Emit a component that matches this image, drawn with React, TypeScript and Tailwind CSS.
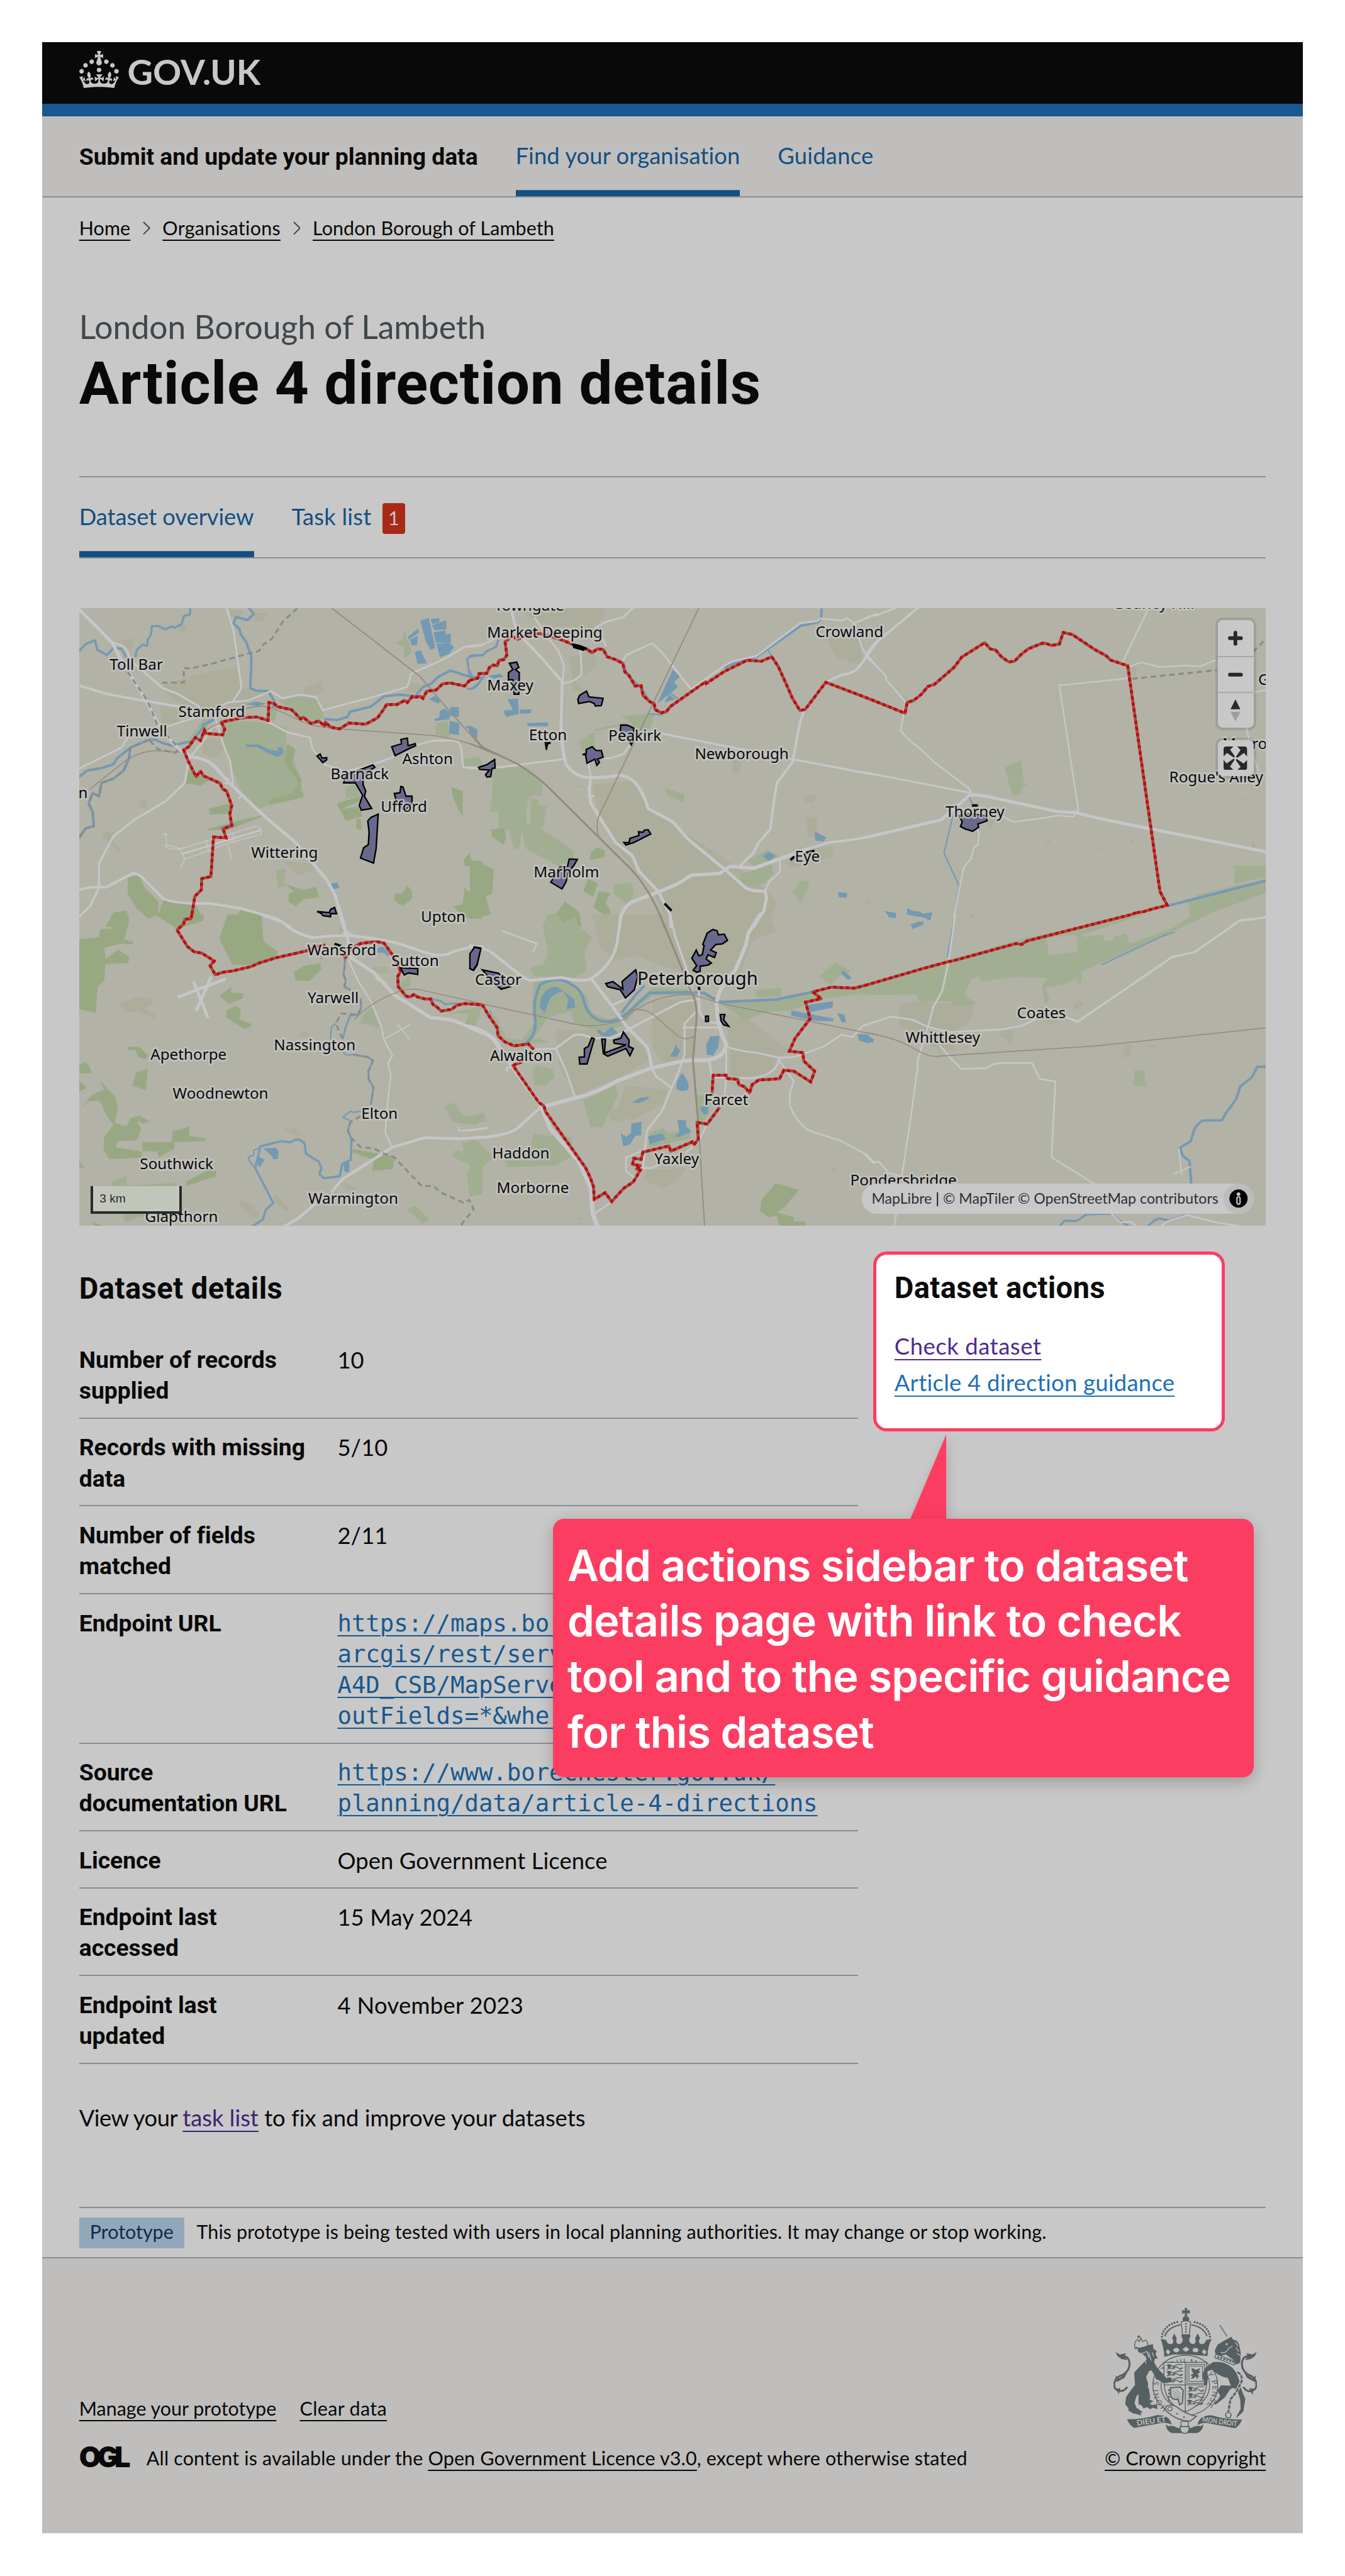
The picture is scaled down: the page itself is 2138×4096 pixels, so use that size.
import type { ReactNode } from 'react';

/* ---------- Map data ---------- */

type Line = [width: number, d: string];
type Tile = {
  x: number;
  y: number;
  urban?: string;
  wood?: string;
  park?: string;
  field?: string;
  water?: string;
  rivers?: Line[];
  roads?: Line[];
  rails?: Line[];
  dashes?: string;
  areas?: string;
  marks?: string;
  border?: string;
};

const SX = 0.42091;
const SY = 1 / 3;

const NW: Tile = {
  x: -8,
  y: -4,
  urban:
    'M325 395L480 330 625 300 640 400 740 420 680 480 520 520 400 470Z M330 480L420 500 400 570 340 600Z M500 650L560 650 575 700 540 740 490 715Z M400 95L437 97 428 125 405 130Z M880 400L950 365 960 420 890 440Z M110 1095L150 1100 150 1150 185 1195 170 1200 108 1120Z M150 175L230 160 230 195 195 215Z M600 15L650 30 630 60 600 50Z M690 30L745 40 715 80 690 75Z M800 1240L910 1250 920 1280 860 1310Z M250 940L280 950 275 990 250 975Z M1280 365L1335 385 1320 420 1275 420Z',
  wood:
    'M820 670L850 700 838 760 875 850 865 900 880 912 880 932 748 965 750 940 840 910 860 870 855 840 820 790 808 740Z M430 790L490 830 520 845 485 875 445 865 425 870Z M518 985L600 960 600 1010 520 1015Z M510 1085L640 1040 730 1015 720 1025 590 1090 510 1090Z M1010 960L1095 925 1105 945 1020 990Z M1020 990L1090 975 1110 1020 1045 1045Z M1085 1035h15l5 55-22-10Z M1450 882L1493 900 1493 1020 1480 1000 1455 930Z M815 1355L880 1380 930 1365 938 1415 880 1425 850 1460 822 1435 825 1395 845 1390Z M1232 1400L1262 1395 1280 1358 1297 1385 1297 1425 1262 1457 1230 1432Z M1498 1230L1520 1200 1525 1235 1568 1240 1568 1345 1540 1330 1540 1265 1500 1265Z M1500 1370L1530 1400 1568 1400 1568 1520 1495 1515 1457 1460 1492 1450Z M205 1320L250 1310 270 1370 325 1440 320 1500 285 1520 240 1470 205 1400Z M345 1425L470 1460 497 1520 400 1560 320 1500Z M150 1490L200 1478 210 1530 200 1560 120 1560Z M640 1475L705 1495 720 1560 590 1560Z',
  park:
    'M565 640L580 560 680 560 745 575 815 590 813 660 870 840 880 930 700 985 640 900 610 800Z M783 460L870 435 945 458 960 545 915 570 870 545 830 500Z M740 490L780 500 770 565 740 545Z M500 540L530 550 495 620 440 650 480 580Z M1040 880L1080 865 1100 920 1045 938Z M1495 745L1560 735 1568 775 1495 780Z M773 1285L813 1275 805 1340 818 1360 785 1370Z M1270 122L1298 225 1268 258 1265 200 1235 182 1260 165Z M1390 570L1438 560 1440 640 1388 625Z',
  water:
    'M1330 72L1362 60 1370 100 1387 205 1370 215 1350 170Z M1370 65L1403 60 1403 82 1375 90Z M1375 95L1430 70 1430 115 1385 120Z M1380 130L1425 120 1428 140 1447 135 1447 180 1390 180Z M1392 185L1440 180 1460 200 1440 235 1405 250Z M1283 150L1320 112 1325 130 1285 165Z M1290 165L1320 145 1318 190 1297 195Z M1308 225L1330 215 1355 280 1320 283Z M1363 455L1385 437 1408 460 1400 475Z M1405 510L1425 500 1447 520 1444 492 1478 492 1478 540 1445 535 1440 552 1385 560 1385 548 1402 545Z M1443 560L1480 570 1478 628 1440 622Z M1503 583L1530 585 1548 610 1548 648Z M987 1350L1012 1345 1018 1370 995 1377Z M660 672L710 675 750 700 785 705 780 685 800 690 805 715 782 735 745 715 700 685 660 686Z M660 478L700 466 740 475 700 488Z',
  rivers: [
    [3.5, 'M19 220L45 185 80 168 88 215 105 225 125 240 150 205 180 208 200 250'],
    [3.5, 'M445 12L445 42 422 50 412 90 385 107 375 100 350 115 320 98 298 100 295 140 282 165 280 195 262 190 240 215 235 245'],
    [4, 'M672 12L690 40 665 70 622 55 612 85 635 115 640 140 660 175 670 210 680 240 680 300 676 400 700 413 745 415 768 460 765 490'],
    [4, 'M19 830L50 800 100 790 150 770 165 740 180 725 215 690 250 670 290 650 310 650 345 670 380 680 420 665 450 660 490 600 495 580 540 550'],
    [4, 'M965 550L1010 555 1050 540 1060 515 1140 490 1190 440 1250 432 1310 440 1340 395 1370 380 1400 345 1445 315 1520 345 1568 350'],
    [3, 'M1510 400Q1540 420 1568 350M1520 345L1510 260 1530 240 1568 240'],
    [4, 'M19 1125L45 1080 75 1070 70 1000 55 960 70 910 95 925 105 860 150 840 190 800 210 740 215 690'],
    [5, 'M568 1080L612 1063'],
  ],
  roads: [
    [5, 'M19 20L100 120 145 180 175 250 275 460 325 580 380 670 420 710 450 735Q520 740 560 810L600 865 720 1010 850 1150 970 1330 1000 1400 1040 1560'],
    [3.5, 'M145 180Q210 190 210 260L340 400 400 430 480 490'],
    [3, 'M585 12L610 110 630 280 642 400 610 465'],
    [4, 'M19 388L130 430 270 462 400 490'],
    [3, 'M360 585L500 530 590 470 670 460 755 415 800 450 870 432 930 445 955 508 1050 475 1130 450 1280 395 1295 330 1420 260 1500 200 1568 188'],
    [3, 'M540 540L575 680 600 760 610 870'],
    [3.5, 'M440 745L425 860 350 950 230 1040 150 1120 95 1250 95 1370 60 1460 19 1510'],
    [4, 'M19 1380Q60 1360 120 1368L225 1300Q250 1300 270 1330L340 1420Q380 1450 520 1445L640 1470 780 1520 830 1560'],
    [3, 'M19 790L180 690 205 640M745 565L820 615 905 640 915 695 960 770 1030 800'],
    [3, 'M1030 810L1150 770 1225 735 1250 700 1380 655 1470 655 1485 680 1495 785 1568 788M440 745L500 650 530 590 570 580'],
    [3, 'M415 1205L712 1092M590 840Q600 870 580 862M650 920L632 935'],
    [1.6, 'M350 1160L410 1180 700 1070Q722 1080 718 1110L600 1150 425 1230 405 1180M350 1160Q350 1185 405 1182M425 1230L408 1270M590 1165L605 1227M355 1150L350 1105M340 1110h18M505 1140l12 55M610 1105l5 45'],
  ],
  rails: [
    [1.8, 'M990 12L1330 345 1420 480 1568 690'],
    [1.5, 'M60 890L180 770Q250 700 330 705L400 712M500 610Q560 560 640 545M660 500Q720 480 760 495L880 565Q930 590 1020 598L1380 630Q1470 645 1568 690'],
  ],
  dashes:
    'M857 12L800 80 760 160 725 190 710 220 660 235 520 285 445 305 420 302 422 372 325 375M205 320L280 460 320 580 400 690M290 655L320 695 385 715 410 690M19 1125L45 1080 75 1070 70 1000 55 960 70 910 95 925 105 860 150 840 190 800 210 740 215 690 290 650',
  areas:
    'M1220 685L1258 670 1255 650 1280 643 1283 680 1310 670 1312 680 1285 695 1233 728Z M933 730L945 720 952 740 970 738 970 748 955 762Z M1148 773L1155 785 1135 800 1110 830 1110 870 1120 900 1115 925 1143 985 1103 993 1095 970 1108 920 1080 860 1035 860 1045 820 1090 800Z M1230 912L1252 908 1255 878 1263 880 1275 925 1298 925 1298 960 1270 995 1240 960Z M1168 1012L1160 1180 1150 1250 1100 1225 1112 1175 1130 1160 1133 1100 1128 1045 1140 1028Z M933 1485L980 1490 985 1475 1000 1465 1008 1495 985 1495 985 1510 955 1505 950 1495Z',
  border:
    'M1520 362L1500 390 1470 382 1445 375 1415 380 1390 410 1355 415 1340 450 1330 440 1310 445 1300 440 1280 470 1270 460 1240 480 1200 480 1188 505 1165 545 1120 575 1055 570 1020 598 985 590 965 565 962 585 940 560 910 572 880 542 870 550 835 505 780 490 768 475 748 470 745 557 700 540 640 545 565 565 578 600 570 627 505 620 500 605 485 655 465 640 440 685 420 700 440 760 468 830 485 803 495 825 560 862 570 890 585 900 605 970 598 1010 605 1068 572 1083 583 1127 535 1123 525 1315 490 1325 488 1380 463 1412 452 1500',
};

const N: Tile = {
  x: 632,
  y: -4,
  urban:
    'M170 12L530 12 480 110 300 100Z M380 250L480 220 490 300 400 360 440 420 400 415Z M470 870L620 850 690 990 860 1130 980 1230 1140 1380 1180 1440 1140 1560 770 1560 700 1380 560 1170 500 1020Z M730 1320L840 1270 860 1300 1120 1360 1140 1560 760 1560Z M1370 160L1500 150 1510 290 1410 250Z M1010 750L1045 750 1035 820 1010 815Z M1290 1030L1335 1030 1330 1130 1300 1120Z M1300 1180L1400 1170 1390 1220 1240 1270 1210 1250Z M390 880L440 870 410 885Z M1290 920L1330 920 1320 960 1285 950Z',
  wood:
    'M82 1085L130 1080 140 1125 130 1160 85 1120Z M0 1260L50 1255 92 1280 85 1400 60 1410 80 1500 0 1520Z M465 1200L490 1172 520 1190 515 1222 460 1235Z M455 1325L490 1350 475 1415 435 1385Z M495 1388L540 1395 520 1440 540 1480 535 1520 475 1465Z M335 1490L365 1435 420 1490 430 1560 330 1560Z',
  park:
    'M580 535L710 525 695 590 660 625 600 600 620 570Z M480 600L600 565 600 575 480 612Z M420 660L480 610 480 690 430 700Z M90 790L200 780 280 850 275 920 230 925 215 1000 220 1060 270 1080 400 1190 395 1240 340 1265 215 1180 200 1090 190 1180 170 1180 150 1090 110 1090 110 1000 75 1005 85 930Z M235 935L265 945 262 965 297 970 280 1080 230 1085Z M0 740L35 735 40 775 0 780Z M555 1355L620 1345 630 1400 610 1450 550 1400Z M280 1560L300 1500 340 1490 340 1560Z M748 885L825 915 822 958 755 915Z M1040 1305L1160 1255 1168 1300 1130 1350 1060 1357 1045 1340Z M1065 1240L1140 1185 1190 1215 1100 1270Z M1275 1335L1305 1340 1300 1370 1272 1445 1240 1390Z',
  water:
    'M780 310L807 345 785 370 800 395 720 475Z M748 470L765 430 790 455Z M145 455L185 450 188 525 140 540 128 510 165 505Z M192 505L235 503 235 522 192 525Z M220 570L300 566 300 585 222 585Z M0 585L28 600 28 645 0 610Z M1125 1215L1148 1195 1175 1215 1150 1240Z M1325 1095L1345 1110 1370 1125 1360 1145 1328 1140Z M1415 1390L1450 1395 1448 1418 1418 1415Z M70 340L115 330 130 345 90 355Z',
  rivers: [
    [3.5, 'M0 245L50 240 60 225 100 200 110 165'],
    [3, 'M0 405Q40 380 60 330M0 320L10 350'],
    [4, 'M1352 12L1350 60 1335 82 1270 98 1145 210 1100 250 1050 260 980 300'],
    [2, 'M1145 212L1160 245M690 525L740 530'],
    [2.5, 'M590 290L610 340 660 400 700 480M770 425L798 450'],
  ],
  roads: [
    [5, 'M350 580Q352 700 370 770Q400 830 460 835Q520 835 575 823Q650 830 685 985L780 1050 840 1135 980 1280 1060 1370Q1090 1390 1135 1385L1140 1420 1130 1480 1090 1560'],
    [4.5, 'M160 12Q165 80 190 140L280 260 355 370 350 580'],
    [5, 'M465 840L458 890 465 960 510 1050 560 1150 625 1215 650 1290 725 1390 770 1500 772 1560'],
    [5.5, 'M575 1560Q575 1480 620 1440L725 1390 800 1350 850 1308 960 1300 1000 1265 1090 1275 1190 1230 1300 1180'],
    [4, 'M1300 1180L1380 1150 1490 1133 1568 1110'],
    [4, 'M1040 1260L1090 1200 1110 1150 1155 1085 1165 980 1180 860 1240 760 1270 560 1285 510 1368 372 1430 335Q1480 330 1500 290L1568 170'],
    [3.5, 'M740 622L1240 745 1490 805 1568 822'],
    [3, 'M250 60L280 120 340 220 362 290 355 375M425 220L430 330Q400 375 360 375M0 790L110 785 360 745M455 765L465 835'],
    [3, 'M480 110L520 80 590 55 625 12M590 265L600 240 700 183 740 230 850 405M850 405L980 290 1010 270 1100 245 1270 85 1335 75 1345 62 1430 72 1450 60 1475 85 1568 40M510 160L522 195'],
    [2.8, 'M1475 85L1510 215 1568 300M0 200L40 195 90 165M520 742L545 740 590 720 620 670M1190 1230L1193 1290 1150 1340 1135 1385M455 925h22'],
  ],
  rails: [
    [1.8, 'M880 12L500 1010Q480 1060 495 1120'],
    [2.2, 'M0 610Q40 680 60 695M0 670Q60 700 100 722'],
    [3, 'M60 695Q120 730 185 770Q260 830 300 880L620 1280Q700 1390 748 1560'],
  ],
  areas:
    'M152 280L180 274 188 300 175 310 190 325 188 430 170 430 165 360 148 360 148 325 165 310Z M415 455L422 435 448 415 458 443 512 450 505 485 482 487 478 475 460 465 418 475Z M580 580L605 580 630 595 628 655 620 675 610 650 578 605Z M290 665L310 665 298 672 294 700Z M433 722L447 718 447 698 470 685 485 703 505 703 512 735 490 745 498 760 488 775 480 745 450 765 445 725Z M33 785L65 772 95 747 97 788 85 790 80 830 65 832 60 820 75 798 38 795Z M592 1150L612 1150 615 1130 650 1115 648 1098 665 1100 670 1090 685 1088 695 1108 630 1150 600 1162Z M382 1230L413 1232 400 1260 375 1300 370 1340 354 1375 311 1343 345 1270 375 1265Z',
  marks: 'M748 1446L775 1481M393 189L420 196 450 210M397 199L440 215M1232 1235L1248 1218M1290 1200L1325 1190',
  border:
    'M0 362L30 352 35 330 65 328 75 300 90 288 105 292 112 265 130 262 142 240 135 175 160 150 185 162 210 148 270 135 340 160 400 190 450 212 470 228 490 210 512 212 528 248 560 262 588 280 595 320 612 340 635 390 658 388 665 435 690 465 708 475 712 505 735 520 755 515 770 490 905 370 908 378 980 318 1065 265 1120 270 1160 248 1185 295 1212 370 1240 450 1268 508 1288 505 1368 372 1520 445',
};

const NE: Tile = {
  x: 1272,
  y: -4,
  urban:
    'M1000 290L1040 300 1040 345 1010 350Z M140 440L160 440 160 470Z M470 1000L520 1040 470 1085Z M0 1430L30 1440 0 1450Z M405 1495h12v25h-12Z M1020 1130h12v18h-12Z M695 1140h14v15h-14Z M1485 1150h13v25h-13Z M1450 935l20 5v8l-16 2Z M900 1172l14 6v8h-14Z',
  park:
    'M535 785L598 752 608 860 620 865 618 875 603 875 600 905 585 922 563 918Z M1416 1262L1540 1262 1540 1315 1420 1350Z M1270 1405L1540 1325 1540 1395 1330 1490 1180 1560 1250 1510 1240 1440 1270 1430Z',
  water:
    'M70 1480L85 1485 115 1490 118 1515 100 1515 85 1500Z M160 1470L185 1482 210 1485 220 1495 258 1488 248 1530 235 1515 200 1510 160 1500Z M175 1550L200 1535 225 1533 205 1560 178 1560Z',
  rivers: [
    [4, 'M1168 1455L1540 1335'],
    [2.2, 'M398 910L400 935 410 960M335 1025L302 1200 310 1225 360 1360 342 1500'],
  ],
  roads: [
    [3, 'M0 60L38 42 45 48 65 35 115 12'],
    [4, 'M0 245L30 190 200 12'],
    [2.8, 'M0 245L40 290 80 345 80 360 155 470 135 605 150 630 180 665 210 695 260 755 400 890 405 910'],
    [3, 'M0 810L400 908'],
    [5, 'M0 1125L290 1040 400 920Q430 915 480 930L740 1000 815 1005Q840 1020 1090 1082L1540 1195'],
    [2.6, 'M1088 12L990 270M745 387L1015 352M745 387L818 990 800 1025 740 1018 690 1030 570 1050 530 1025'],
    [2.6, 'M1015 295L1060 275 1130 298 1230 290 1285 295 1345 265M1490 422L1540 408M1465 590L1480 700 1510 800M415 1040L437 1105 430 1165 418 1170 405 1230 378 1270 360 1380 342 1500 338 1560'],
    [2.6, 'M1400 1560Q1430 1525 1480 1522L1530 1515 1540 1505'],
  ],
  dashes: 'M1025 355L1350 313M1490 225L1540 160',
  areas: 'M360 1020L372 1050 365 1072 385 1085 412 1095 435 1075 432 1060 467 1045 462 1020 435 1015 400 1010Z',
  marks: 'M409 970L432 970',
  border:
    'M0 445L152 522 160 470 185 460 215 430 240 392 265 382 340 300 370 250 458 180 480 210 500 215 520 245 550 273 572 270 600 235 625 210 680 182 695 184 715 193 745 187 760 130 795 140 880 212 925 243 942 264 1008 292 1132 1388 1160 1455 1110 1470 1070 1485 1040 1491',
};

const SW: Tile = {
  x: -8,
  y: 496,
  urban:
    'M170 435L240 400 300 410 295 440 265 455 315 490 305 505 240 470 190 470Z M805 1040L850 1035 875 1080 830 1060Z M865 575L900 565 895 600 860 590Z M635 1385L690 1410 710 1460 690 1470 640 1425Z M770 1355L830 1430 815 1440 770 1400Z M1040 1300L1085 1325 1075 1345 1040 1330Z M1020 60L1040 70 1035 105 1015 100Z M1130 260L1200 250 1210 285 1170 285Z',
  wood:
    'M19 120L95 110 100 70 145 68 165 0 210 0 208 50 190 120 225 130 225 145 185 140 115 160 120 215 170 170 212 205 207 235 120 240 115 320 90 350 82 475 60 470 19 460Z M310 0L497 0 495 30 395 70Z M590 0L720 0 727 130 783 180 770 215 697 245 607 243 557 115Z M843 280L880 250 945 235 950 265 905 322 850 318Z M557 395L605 350 600 378 652 382 645 408 595 435Z M585 465L620 442 640 460 635 510 680 530 678 545 655 557 610 520 585 500Z M203 642L250 642 285 685 270 703 245 690 235 658 205 658Z M19 735L40 712 58 735 67 770 19 772Z M240 765L282 748 275 853 222 828Z M19 810L48 840 19 860Z M30 932L70 873 115 850 97 805 125 840 155 880 168 940 155 1010 200 1030 215 990 250 975 288 1003 265 1015 240 1000 258 1040 240 1095 165 1100 160 1130 258 1150 260 1180 135 1187 112 1140 115 1080 150 1020 122 970 97 902 60 905Z M262 1105L375 1105 378 1055 440 1028 443 1075 505 1085 505 1100 385 1105 385 1135 325 1180 320 1150 262 1148Z M430 1295L500 1250 520 1215 545 1245 545 1270 430 1318Z M1070 1138L1230 1175 1225 1235 1145 1245 1150 1190 1070 1155Z M70 1490L110 1512 75 1512Z M19 1200L40 1230 19 1230Z',
  park:
    'M140 1300L200 1270 200 1315 390 1303 390 1440 240 1470 200 1495 170 1430Z M1100 520Q1110 470 1145 450L1175 552 1095 525Z M1250 330L1292 290 1290 350 1255 365Z M1425 935L1460 912 1490 970 1560 1000 1550 1020 1455 1010Z M1490 1105L1543 1103 1535 1155 1568 1180 1568 1355 1520 1370 1508 1250 1530 1220 1455 1175 1460 1145 1495 1150Z M1275 1430L1310 1415 1368 1480 1340 1500Z M1430 480L1568 445 1540 545 1500 530 1520 480Z M945 200L965 195 945 232Z',
  water:
    'M725 1135L775 1132 785 1150 782 1187 765 1187 755 1165Z M705 1172L732 1190 712 1227 703 1210Z M1035 1210Q1045 1190 1058 1210L1056 1245Q1045 1260 1037 1240Z M1165 165L1185 155 1212 190 1205 203 1190 185 1165 185Z',
  rivers: [
    [3, 'M1040 200L1040 240 1035 290 1043 320 1038 350 1060 365M1100 410L1103 450 1090 485 1060 490 1045 540 1032 600'],
    [3, 'M1075 680L1130 692 1148 710 1130 760 1132 800 1150 840 1140 920M1060 1010L1052 1050 1065 1090'],
    [3.5, 'M1065 1090L1063 1190 1030 1210 1020 1270 960 1280 942 1260 950 1230 940 1200 890 1160 885 1110 865 1092 850 1092 830 1105 795 1100 715 1125 705 1180 695 1230 765 1400 735 1435 725 1480 685 1512'],
    [2.2, 'M1100 955L1075 960 1060 955 1033 985 1065 1003M712 1130L690 1145 690 1165 668 1180 675 1200 695 1230M985 605L988 545 1005 530M1035 670L1045 682 1075 680'],
    [3, 'M1375 410L1410 420 1425 435 1470 430'],
  ],
  roads: [
    [4.5, 'M720 0L800 35Q850 95 920 112Q1000 100 1060 102Q1200 120 1270 150L1350 185Q1400 205 1440 190Q1500 155 1568 155'],
    [5.5, 'M1022 0L1050 110 1060 205 1150 280 1230 390 1370 500Q1450 505 1490 530L1568 575'],
    [2.6, 'M1055 220L1090 320 1140 420 1180 540 1190 605 1223 685 1205 720 1217 780 1205 900 1195 1060 1222 1130'],
    [4.5, 'M810 1512L860 1475 925 1405M990 1345L1030 1285 1222 1130 1345 1083 1480 1088 1568 1080'],
    [2, 'M1190 605L1290 535M1245 535L1287 602M1060 105L1030 90 1050 80 1090 110'],
    [2.6, 'M1568 1040L1480 1050 1475 1035M1150 280L1170 320 1160 310M1200 330L1195 345'],
    [5, 'M402 398L577 314M460 330L512 495M525 305L470 462'],
  ],
  rails: [[1.5, 'M1078 508Q1130 430 1250 372Q1290 355 1330 365L1568 432']],
  dashes:
    'M1040 200L1040 240 1035 290 1043 320 1038 350 1060 365M1100 410L1103 450 1090 485 1025 480 1005 530 1030 600M1075 680L1130 692 1148 710 1130 760 1132 800 1150 840 1140 920M1100 978L1060 1010 1052 1050 1065 1085 1100 1128 1150 1135 1190 1160 1230 1178 1335 1318 1380 1318 1410 1350 1495 1398 1518 1385 1535 1430 1490 1500 1490 1512',
  areas:
    'M1253 258L1320 262 1320 290 1285 283 1268 293Z M1537 157L1562 162 1548 245 1535 270 1520 262 1530 185Z',
  marks: 'M1000 142L1025 152',
  border:
    'M452 0L448 20 425 22 420 45 395 75 435 155 460 180 490 187 538 225 522 248 542 292 570 280 610 273 680 252 710 235 780 208 890 177 930 155 965 148M1030 190L1042 210 1050 190 1070 160 1100 140 1130 135 1165 132 1190 138 1220 190 1255 275 1243 300 1245 350 1275 395 1290 400 1305 388 1320 400 1350 410 1370 410 1378 435 1395 450 1410 468 1450 460 1470 440 1500 432 1568 438',
};

const S: Tile = {
  x: 632,
  y: 496,
  urban:
    'M470 0L1150 0 1180 80 1080 130 1040 300 960 330 760 260 640 200 560 220 500 160Z M330 560L600 560 700 700 560 800 400 880 340 720Z M980 480L1060 500 1230 660 1180 700 1150 780 1000 790 1000 650Z M700 420L860 400 870 690 740 720 700 640Z M600 830L760 850 740 920 620 1000 560 960Z M680 1240L830 1230 800 1290 740 1330 670 1290Z M540 940L610 960 590 1010 540 1000Z M410 1480L435 1465 430 1485Z M1380 1240L1400 1230 1415 1255Z',
  wood:
    'M1120 1385L1175 1305 1265 1335 1210 1420 1180 1445 1245 1470 1245 1490 1290 1490 1290 1512 1190 1512 1180 1460 1150 1470 1115 1440Z M340 0L420 0 360 40Z',
  park:
    'M300 0L400 0 420 60 470 110 440 180 450 270 400 310 250 300 230 260 285 240 300 180 280 60Z M245 330Q330 280 400 340L450 400 470 480 540 510 600 470 700 355 840 365 1000 430 1180 420 1320 380 1568 330 1568 375 1350 410 1230 465 1130 475 1060 515 960 430 880 385 700 395 640 455 590 540 500 570 400 530 390 470 300 500 240 610 260 600 305 620 240 625 180 640 120 590 75 470 100 500 140 600 200 610 250 520 240 420Z M250 730L320 750 325 790 290 830 250 830 240 770Z M435 900L560 830 568 880 510 1030 465 1035Z M1342 300L1408 230 1465 275 1420 300 1385 340Z M245 1060L310 1075 390 1080 400 1170 350 1200 330 1220 140 1225 130 1170 230 1150Z M0 1090L30 1100 90 1180 40 1240 45 1360 0 1360Z M690 1060L740 1035 760 1060 840 1045 850 1085 770 1110 690 1130Z M870 880L930 870 920 960 900 1000 875 1000Z M1100 365L1195 355 1200 400 1100 400Z M0 980L55 960 62 1005 0 1010Z',
  water:
    'M272 410Q290 350 335 350L358 372Q310 385 300 430L288 478 268 450Z M358 370L400 410 405 450 372 460 378 410Z M485 560L500 560 515 575 545 543 568 575 530 592 500 585Z M790 630L808 660 795 690 768 690 782 660Z M925 590L960 590 955 640 935 685 910 680 908 630Z M815 768Q850 820 838 850Q815 865 795 845Q788 820 815 768Z M622 912L655 890 688 884 685 895 650 915Z M620 1015L660 1005 658 1070 635 1075 615 1115 590 1125 580 1060 600 1080 620 1060Z M685 1075L740 1063 753 1090 690 1115Z M798 998L832 998 830 1025 853 1055 800 1080 785 1075 805 1060Z M885 935L915 930 915 965 900 970 887 950Z M1290 440L1397 420 1393 452 1300 475Z M1235 465L1320 485 1398 505 1395 517 1320 515 1235 490Z M1412 478L1440 485 1445 525 1428 520Z M1490 580L1530 582 1552 612 1530 625 1495 610Z M1430 272L1440 275 1467 305 1455 318 1430 290Z',
  rivers: [
    [4.5, 'M215 625Q260 580 250 500Q240 420 270 340Q340 290 390 340Q430 360 440 430Q460 510 520 520Q580 520 630 450L690 380 840 378 900 380 960 425 1180 412 1320 375'],
    [4, 'M585 472L640 385 668 348'],
    [2, 'M70 485Q85 480 78 468'],
  ],
  roads: [
    [4.5, 'M0 150Q60 160 90 190L200 300 230 320 350 305Q440 330 465 310Q560 240 570 100L580 0'],
    [5, 'M465 310L545 440 600 540 680 640Q695 690 697 745'],
    [6, 'M272 935L405 890Q480 870 560 810L697 745 820 710 920 705Q980 690 985 630Q950 540 948 440Q950 360 1020 270L1060 150 1070 90 1115 0'],
    [7, 'M0 545Q90 580 110 640L165 740 270 920 310 1040 420 1200 465 1330 472 1450 490 1516'],
    [4.5, 'M0 1085Q130 1080 180 1040L272 935'],
    [3.5, 'M770 0L790 110 840 290 855 380M880 370L882 470Q900 530 955 525'],
    [3.5, 'M545 440L600 410 640 350M330 650L400 585Q430 575 470 600L545 600 620 550 740 470 810 425 880 410'],
    [3.2, 'M330 650L370 760 405 890M240 655L330 650M820 548L960 548M697 745L720 790 775 840M920 710L930 790'],
    [3.2, 'M870 470L825 530 825 680 800 770 775 840 740 950 680 1050 665 1230 700 1230 730 1210'],
    [2.8, 'M985 630L985 790 980 870M985 640Q1040 665 1100 670L1190 695 1250 690 1360 640 1430 582 1470 595 1510 540 1568 515'],
    [2.8, 'M930 790L1080 795Q1180 780 1190 695M1190 710L1245 810 1230 860 1230 930Q1270 1040 1320 1055L1430 1100 1510 1155 1550 1205 1568 1200'],
    [2.8, 'M910 1020L880 1100 830 1155M480 1450L545 1395M655 1150L600 1180 600 1245 630 1275M125 80L257 140 243 180M0 1047L68 1035M165 740Q130 740 145 760'],
  ],
  rails: [
    [3, 'M730 0L850 370Q875 420 870 520L857 700 880 1050'],
    [1.8, 'M880 1050L902 1516'],
    [1.5, 'M0 420L380 525Q480 560 590 510Q700 380 860 390L960 430 1568 585M620 465Q670 450 710 490L790 580Q830 620 860 590'],
  ],
  areas:
    'M933 72L950 78 955 98 978 95 990 125 970 142 945 145 925 172 947 185 940 208 915 195 908 215 928 235 915 245 885 250 885 275 872 280 858 270 872 248 853 212 870 172 880 200 893 195 900 150 895 145 912 90Z M637 268L645 300 632 365 598 405 578 365 530 350 522 335 550 325 588 362 585 325Z M468 598L478 603 465 660 450 725 422 725 420 692 440 690 440 650 455 640Z M507 605L521 605 517 672 600 632 555 625 552 610 580 600 590 570 612 610 610 640 628 650 615 685 600 650 530 687 513 675Z M906 493h11v25h-11Z M962 485L980 485 975 510 995 542 975 535 965 515Z M0 190L18 158 42 165 28 240 12 270 0 262Z M48 268L110 285 155 350 120 362 90 330Z',
  marks: 'M880 350L882 366',
  border:
    'M48 438L70 485 105 550 108 588 135 618 170 637 225 628 245 655M200 715L165 732 265 912 285 930 290 955 445 1230 462 1275 475 1320 478 1382 520 1350 545 1393 590 1330 628 1298 655 1240 640 1235 655 1218 625 1213 630 1183 658 1188 665 1153 765 1123 772 1148 855 1103 862 1117 878 1090 873 1008 912 1017 960 935M930 880L935 780 985 780 988 795 1030 800 1033 825 1055 835 1075 865 1085 825 1110 803 1190 797 1207 755 1245 760 1310 812 1325 760 1283 710 1280 670 1228 663 1250 600 1308 505 1290 425 1350 408 1318 375 1390 352 1478 357 1520 343',
};

const SE: Tile = {
  x: 1272,
  y: 496,
  urban:
    'M130 430L220 420 330 430 420 440 400 520 350 560 340 660 290 660 200 600 130 540Z M515 565L570 560 560 635 540 600 515 590Z M800 440L820 415 840 430 800 470Z M670 440L740 520 700 540Z M1000 630L1025 635 1015 690 990 695Z M1060 625L1118 635 1118 655Z M335 1138L358 1120 350 1135Z M785 1090l15 12-10 4Z',
  park:
    'M0 340L200 262 420 185 600 118 700 92 1040 0 1070 0 830 98 845 110 910 95 918 130 955 120 955 105 1000 92 1015 140 1035 135 1180 65 1260 0 1320 0 1080 140 830 275 832 320 820 340 812 310 770 335 690 355 708 405 690 435 680 345 700 308 580 303 520 310 455 325 430 302 410 310 380 390 425 430 400 440 365 443 335 440 330 420 205 420 200 388 70 390 0 390Z M1033 755L1075 757 1072 800 1080 835 1032 830Z',
  field: 'M695 112L810 98 818 182 705 197Z',
  water: 'M85 0h33l-3 15-25-3Z M175 45L225 33 220 50 180 70Z M0 585L32 605 28 622 0 620Z M205 0L250 0 245 28 225 15Z',
  rivers: [
    [4, 'M1540 737L1505 740 1485 790 1440 835 1425 895 1385 965 1370 998 1295 1000Q1270 1020 1262 1050L1250 1100 1210 1130 1218 1170 1245 1195 1252 1308'],
    [3.5, 'M745 1516L765 1485 810 1488 850 1455 945 1452 975 1485 1015 1514M1083 1514L1110 1485 1130 1475 1170 1485 1235 1455'],
    [2, 'M910 242L1140 105 1187 85M340 20L315 205'],
  ],
  roads: [
    [3, 'M345 0L330 130 318 235 295 370 260 450 240 545M0 535L100 495 180 510 240 545 320 570 520 558 600 540 650 510'],
    [3.5, 'M775 500L815 520 1180 205 1265 182 1440 28 1490 22 1540 12'],
    [2.8, 'M240 545L200 710 200 745 170 1020 140 1265M118 1452L110 1516M285 635L330 700 370 750 465 745Q490 720 530 720L640 720 670 797 730 810 715 1177 880 1308'],
    [2.8, 'M0 1160L35 1205 50 1198 90 1255 140 1270M945 1452L980 1495 1020 1490 1042 1514M1135 1514L1160 1490 1235 1458 1350 1495 1440 1512'],
    [2.4, 'M1205 1140L1215 1260M1187 1258L1248 1225'],
  ],
  rails: [[1.6, 'M0 572Q110 595 180 645Q240 690 270 688L880 638 1540 550']],
  border: 'M1040 -9L1020 0 820 64 620 128 600 145 580 140 340 223 320 228 220 262 0 343',
};

const TILES = [NW, N, NE, SW, S, SE];

const PLACES: [Tile, string, number, number, number?][] = [
  [NW, 'Toll Bar', 238, 312],
  [NW, 'Stamford', 528, 540],
  [NW, 'Tinwell', 260, 634],
  [NW, 'Ashton', 1358, 770],
  [NW, 'Barnack', 1097, 843],
  [NW, 'Ufford', 1267, 1000],
  [NW, 'Wittering', 808, 1225],
  [NW, 'Upton', 1418, 1537],
  [NW, 'Ketton', -40, 935],
  [N, 'Towngate', 228, 24],
  [N, 'Market Deeping', 288, 156],
  [N, 'Maxey', 155, 413],
  [N, 'Etton', 300, 653],
  [N, 'Peakirk', 634, 656],
  [N, 'Newborough', 1045, 746],
  [N, 'Marholm', 371, 1320],
  [N, 'Eye', 1297, 1242],
  [N, 'Crowland', 1459, 151],
  [NE, 'Thorney', 421, 1025],
  [NE, "Rogue's Alley", 1348, 858],
  [NE, 'Murrow', 1480, 695],
  [NE, 'Gedney Hill', 1107, 16],
  [NE, 'Guyhirn', 1620, 385],
  [SW, 'Wansford', 1028, 196],
  [SW, 'Sutton', 1310, 250],
  [SW, 'Yarwell', 995, 430],
  [SW, 'Nassington', 924, 660],
  [SW, 'Apethorpe', 439, 704],
  [SW, 'Woodnewton', 562, 893],
  [SW, 'Elton', 1173, 990],
  [SW, 'Southwick', 393, 1236],
  [SW, 'Warmington', 1072, 1402],
  [SW, 'Glapthorn', 412, 1492],
  [S, 'Castor', 109, 340],
  [S, 'Alwalton', 197, 710],
  [S, 'Peterborough', 875, 340, 29.7],
  [S, 'Farcet', 985, 924],
  [S, 'Yaxley', 795, 1210],
  [S, 'Haddon', 196, 1183],
  [S, 'Morborne', 242, 1353],
  [SE, 'Pondersbridge', 146, 1316],
  [SE, 'Whittlesey', 297, 622],
  [SE, 'Coates', 676, 503],
];

function Strokes({ lines, color }: { lines?: Line[]; color: string }) {
  return (
    <g fill="none" stroke={color} strokeLinejoin="round" strokeLinecap="round">
      {lines?.map(([w, d], i) => (
        <path key={i} d={d} strokeWidth={w} vectorEffect="non-scaling-stroke" />
      ))}
    </g>
  );
}

function Layer({ children }: { children: (t: Tile) => ReactNode }) {
  return (
    <>
      {TILES.map((t, i) => (
        <g key={i} transform={`translate(${t.x} ${t.y}) scale(${SX} ${SY})`}>
          {children(t)}
        </g>
      ))}
    </>
  );
}

function MapCanvas() {
  return (
    <svg viewBox="0 0 1920 1000" className="block h-full w-full" aria-label="Map of the area">
      <rect width="1920" height="1000" fill="#b2b2a6" />
      <Layer>
        {(t) => (
          <>
            <path d={t.urban} fill="#adad9c" />
            <path d={t.park} fill="#a2ae92" />
            <path d={t.wood} fill="#98a883" />
            <path d={t.field} fill="#b2b2a6" />
          </>
        )}
      </Layer>
      <Layer>
        {(t) => (
          <>
            <path d={t.water} fill="#7499b3" />
            <Strokes lines={t.rivers} color="#7499b3" />
          </>
        )}
      </Layer>
      <Layer>
        {(t) => (
          <>
            <Strokes lines={t.roads} color="#c6c6c8" />
            <Strokes lines={t.rails} color="#928a80" />
            <path d={t.dashes} fill="none" stroke="#8b8b8b" strokeWidth="3.2" strokeDasharray="9 6" vectorEffect="non-scaling-stroke" />
          </>
        )}
      </Layer>
      <Layer>
        {(t) => (
          <>
            <path d={t.border} fill="none" stroke="#9b4a4a" strokeWidth="4.6" strokeLinejoin="round" vectorEffect="non-scaling-stroke" />
            <path d={t.border} fill="none" stroke="#cd0000" strokeWidth="4.6" strokeDasharray="5 5" vectorEffect="non-scaling-stroke" />
            <path d={t.areas} fill="#69698e" stroke="#000" strokeWidth="2.4" vectorEffect="non-scaling-stroke" />
            <path d={t.marks} fill="none" stroke="#000" strokeWidth="4" vectorEffect="non-scaling-stroke" />
          </>
        )}
      </Layer>
      <g
        fill="#0a0a0a"
        stroke="#c6c6c4"
        strokeOpacity="0.72"
        strokeWidth="6"
        strokeLinejoin="round"
        paintOrder="stroke"
        textAnchor="middle"
        className="font-['Noto_Sans',sans-serif]"
      >
        {PLACES.map(([t, name, x, y, size = 24.7]) => (
          <text key={name} x={t.x + x * SX} y={t.y + y * SY} fontSize={size}>
            {name}
          </text>
        ))}
      </g>
    </svg>
  );
}

function MapPanel() {
  return (
    <div className="relative mt-[80px] h-[1000px] w-[1920px] overflow-hidden">
      <MapCanvas />
      <div className="absolute right-[20px] top-[20px] flex flex-col gap-[20px]">
        <div className="flex w-[58px] flex-col rounded-[8px] bg-[#c8c8c8] shadow-[0_0_0_4px_rgba(0,0,0,0.1)]">
          <div className="flex h-[58px] items-center justify-center">
            <svg width="24" height="24" viewBox="0 0 24 24" stroke="#292929" strokeWidth="6" strokeLinecap="round">
              <path d="M3 12h18M12 3v18" />
            </svg>
          </div>
          <div className="flex h-[58px] items-center justify-center border-t-[2.1px] border-[#a8a8a8]">
            <svg width="24" height="24" viewBox="0 0 24 24" stroke="#292929" strokeWidth="6" strokeLinecap="round">
              <path d="M3 12h18" />
            </svg>
          </div>
          <div className="flex h-[58px] items-center justify-center border-t-[2.1px] border-[#a8a8a8]">
            <svg width="16" height="36" viewBox="0 0 16 36">
              <path d="M8 0l8 16H0z" fill="#292929" />
              <path d="M8 36l8-16H0z" fill="#9e9e9e" />
            </svg>
          </div>
        </div>
        <div className="flex h-[58px] w-[58px] items-center justify-center rounded-[8px] bg-[#c8c8c8] shadow-[0_0_0_4px_rgba(0,0,0,0.1)]">
          <svg width="38" height="38" viewBox="0 0 38 38" fill="#292929">
            {[0, 90, 180, 270].map((a) => (
              <path key={a} transform={`rotate(${a} 19 19)`} d="M0 16V4Q0 0 4 0H16L10.5 5 18 15.5Q18.5 18 16 17.500L5.500 10.500Z" />
            ))}
          </svg>
        </div>
      </div>
      <div className="absolute bottom-[20px] left-[19px] h-[44px] w-[147px] border-x-[4.1px] border-b-[4.1px] border-[#292929] bg-[#cdd0ca]/70 pl-[10px] pt-[8px] font-['Liberation_Sans',sans-serif] text-[19.5px] leading-[24px] text-[#292929]">
        3 km
      </div>
      <div className="absolute bottom-[20px] right-[20px] flex h-[48px] w-[634px] items-center justify-between rounded-[24px] bg-[#c8c8c8] pl-[16px]">
        <span className="whitespace-nowrap text-[23.5px] leading-[30px] tracking-[0.05px] text-[#2f2f2f]">
          MapLibre <span className="text-black">|</span> © MapTiler © OpenStreetMap contributors
        </span>
        <span className="flex h-[48px] w-[48px] items-center justify-center rounded-full bg-[#bcbcbc]">
          <svg width="30" height="30" viewBox="0 0 30 30">
            <circle cx="15" cy="15" r="14.7" fill="#000" />
            <circle cx="15" cy="8" r="3" fill="#c8c8c8" />
            <rect x="12.5" y="12.5" width="5" height="11.5" rx="2.300" fill="none" stroke="#c8c8c8" strokeWidth="2.2" />
          </svg>
        </span>
      </div>
    </div>
  );
}

/* ---------- Emblems ---------- */

function Crown() {
  return (
    <svg width="64" height="60" viewBox="0 0 32 30" fill="#c8c8c8" aria-hidden="true">
      <path d="M22.6 10.4c-1 .4-2-.1-2.4-1-.4-.9.1-2 1-2.4.9-.4 2 .1 2.4 1s-.1 2-1 2.4m-5.9 6.7c-.9.4-2-.1-2.4-1-.4-.9.1-2 1-2.4.9-.4 2 .1 2.4 1s-.1 2-1 2.4m10.8-3.7c-1 .4-2-.1-2.4-1-.4-.9.1-2 1-2.4.9-.4 2 .1 2.4 1s0 2-1 2.4m3.3 4.8c-1 .4-2-.1-2.4-1-.4-.9.1-2 1-2.4.9-.4 2 .1 2.4 1s-.1 2-1 2.4M17 4.7l2.3 1.2V2.5l-2.3.7-.2-.2.9-3h-3.4l.9 3-.2.2c-.1.1-2.3-.7-2.3-.7v3.4L15 4.7c.1.1.1.2.2.2l-1.3 4c-.1.2-.1.4-.1.6 0 1.1.8 2 1.9 2.2h.7c1-.2 1.9-1.1 1.9-2.1 0-.2 0-.4-.1-.6l-1.3-4c-.1-.2 0-.2.1-.3m-7.6 5.700c.9.4 2-.1 2.400-1 .4-.9-.1-2-1-2.400-.9-.4-2 .1-2.400 1s0 2 1 2.400m-5 3c.9.4 2-.1 2.400-1 .4-.9-.1-2-1-2.400-.9-.4-2 .1-2.400 1s.1 2 1 2.400m-3.200 4.800c.9.4 2-.1 2.400-1 .4-.9-.1-2-1-2.400-.9-.4-2 .1-2.400 1s0 2 1 2.400m14.800 11c4.400 0 8.600.3 12.300.8 1.100-4.500 2.400-7 3.700-8.800l-2.500-.9c.2 1.300.3 1.900 0 2.700-.4-.4-.8-1.100-1.100-2.300l-1.200 4c.7-.5 1.300-.8 2-.9-1.100 2.500-2.600 3.100-3.500 3-1.100-.2-1.700-1.200-1.500-2.100.3-1.200 1.500-1.500 2.100-.1 1.100-2.300-.8-3-2-2.300 1.900-1.900 2.100-3.500.6-5.600-2.100 1.600-2.100 3.200-1.200 5.500-1.200-1.400-3.200-.6-2.500 1.600.9-1.400 2.100-.5 1.900.8-.2 1.100-1.700 2.100-3.500 1.900-2.700-.2-2.900-2.100-2.900-3.600.7-.1 1.900.5 2.900 1.900l.4-4.300c-1.100 1.100-2.100 1.400-3.200 1.400.4-1.200 2.100-3 2.100-3h-5.400s1.700 1.900 2.100 3c-1.100 0-2.100-.2-3.200-1.400l.4 4.300c1-1.400 2.200-2 2.900-1.900-.1 1.500-.2 3.400-2.900 3.600-1.900.2-3.400-.8-3.500-1.900-.2-1.300 1-2.200 1.900-.8.7-2.300-1.200-3-2.500-1.600.9-2.200.9-3.900-1.200-5.500-1.500 2-1.300 3.700.6 5.600-1.200-.7-3.100 0-2 2.300.6-1.400 1.800-1.100 2.100.1.2.9-.3 1.900-1.500 2.100-.9.2-2.400-.5-3.500-3 .6 0 1.200.3 2 .9l-1.200-4c-.3 1.100-.7 1.900-1.100 2.300-.3-.8-.2-1.400 0-2.700l-2.900.9C1.300 23 2.600 25.500 3.700 30c3.700-.5 7.900-.8 12.300-.8" />
    </svg>
  );
}

function Lion({ x, y }: { x: number; y: number }) {
  return (
    <g transform={`translate(${x} ${y})`} fill="none" stroke="#565f62" strokeWidth="6">
      <path d="M2 8q12-8 22 0t22-2q14-6 32-2M8 20q14 6 26-2t24 2 20-2M4 28l12-8M32 26l10-8M62 26l12-8" strokeWidth="4" />
      <path d="M6 4q10-4 18 2l-4 14-12-2z" fill="#565f62" stroke="none" />
    </g>
  );
}

function Crest() {
  return (
    <svg width="232" height="204" viewBox="587 285 673 612" preserveAspectRatio="none" fill="#565f62" aria-label="Royal coat of arms">
      {/* crown */}
      <path d="M920 285h14l-3 12 14-3v18l-14-3 3 14h-14l3-14-14 3v-18l14 3z" />
      <path d="M912 345q-4-18 15-22 19 4 15 22l-4 12h-22z" />
      <path d="M905 352q22-10 44 0l-6 62h-32z" fill="#bfbebd" stroke="#565f62" strokeWidth="4" />
      <path d="M927 358v46" stroke="#565f62" strokeWidth="8" strokeDasharray="7 6" fill="none" />
      <path d="M814 424q10-62 86-74M1040 424q-10-62-86-74" fill="none" stroke="#565f62" strokeWidth="10" strokeLinecap="round" strokeDasharray="0.1 13.5" />
      <path d="M828 422q14-44 74-56M1026 422q-14-44-74-56" fill="none" stroke="#565f62" strokeWidth="6" />
      <path d="M808 434l26 6q8 26 28 18 12-10 0-26l10-24 12 24q-8 22 8 28 20 0 20-24l-8-20h46l-8 20q0 24 20 24 16-6 8-28l12-24 12 24q-12 16 0 26 20 8 28-18l26-6q-18 36-20 84l-90-8h-70l-42 12q-4-50-18-90z" />
      <g fill="#bfbebd">
        <ellipse cx="882" cy="489" rx="14" ry="11" />
        <ellipse cx="972" cy="489" rx="14" ry="11" />
        <path d="M927 472l17 14-17 12-17-12zM842 484l12 14-10 14-12-14zM1012 484l12 14-10 14-12-14z" />
      </g>
      {/* garter and shield */}
      <ellipse cx="924" cy="660" rx="152" ry="146" fill="#bfbebd" stroke="#565f62" strokeWidth="4" />
      <ellipse cx="924" cy="660" rx="114" ry="112" fill="none" stroke="#565f62" strokeWidth="4" />
      <path id="garter" d="M842 772A128 122 0 1 1 1006 772" fill="none" />
      <text fontSize="36" className="font-['Lato',sans-serif]" letterSpacing="4">
        <textPath href="#garter">HONI SOIT QUI MAL Y PENSE</textPath>
      </text>
      <path d="M824 549h200v90q0 110-100 150-100-40-100-150z" fill="#bfbebd" stroke="#565f62" strokeWidth="4" />
      <path d="M924 549v240M824 658h200" stroke="#565f62" strokeWidth="4" />
      <Lion x={834} y={556} />
      <Lion x={834} y={588} />
      <Lion x={834} y={620} />
      <Lion x={934} y={664} />
      <Lion x={934} y={696} />
      <Lion x={930} y={728} />
      <path d="M932 558h82v92h-82zM941 567h64v74h-64z" fill="none" stroke="#565f62" strokeWidth="3" />
      <path d="M952 582q10-10 16 2l14-2 12-8-6 16 8 8-14 4 6 14-10 14-4-14-12 10-12 2 8-12-10-6 14-6z" />
      <path d="M854 672l46-4 14 16-4 62-12 8-8-26q-30 4-34-20z" fill="none" stroke="#565f62" strokeWidth="6" />
      <path d="M866 684l36 34M866 696l34 32M878 680l26 24M866 708l26 24" stroke="#565f62" strokeWidth="2" />
      <path d="M848 680v60" stroke="#565f62" strokeWidth="8" strokeDasharray="8 8" />
      {/* lion supporter */}
      <path d="M688 478q-6-26 10-40l10 10 8-18 8 18 14-8q14 14 8 40z" fill="none" stroke="#565f62" strokeWidth="4" />
      <path d="M705 416v18M698 424h16" stroke="#565f62" strokeWidth="5" />
      <path d="M686 486l70-22 16-4 2 22 16 12-6 14 10 20-14 4-2 16 14 26 44 52 24 6 2 12-40 6-34-22-22-40-12 2-14 30 10 34-8 50 10 22 22 12-20 10 16 0-24 8-12-30-10-16-8-34-10 26-12 12-8 30 8 24 30 22-10 4 4 12-14-4-26-6-22-14 2-10-16-20 4-36 20-28 22-30-4-60 60-66-18-22-22-10-8-30z" />
      <path d="M706 670l46 2 8 50-20 20 28 14 22-4 4 24-22-8-12 8-16-10-16 6-10-16-14-4z" />
      <path d="M700 500l18 6 26-10 10 30M712 520l14 10 14-12M704 532l8 14M734 532l6 22M752 500l12 40M768 500l8 20" fill="none" stroke="#bfbebd" strokeWidth="4" />
      <path d="M652 668q-18 26-44 18-24-12-16-42 8-26 36-34 38-20 34-62-6-32-36-30" fill="none" stroke="#565f62" strokeWidth="9" />
      <path d="M597 498l20 12 28-6-6 14 12 20-26-6-20-14zM596 612l16 14 40-28-14 26-36 20zM600 676l20-2-8 30z" />
      {/* unicorn supporter */}
      <path d="M1086 368l34 54" stroke="#565f62" strokeWidth="5" strokeDasharray="9 2" />
      <path d="M1140 424l8 14 18 6 10 16 8 40-2 50-20 10-8-20-40-30-32 10-16-12-4-16 14-30 30-18z" />
      <path d="M1090 500q24 8 36-18l20-14M1158 450l14 20M1162 476l14 20M1166 504l16 12" fill="none" stroke="#bfbebd" strokeWidth="4" />
      <circle cx="1118" cy="460" r="5" fill="#bfbebd" />
      <path d="M1068 508l90 36-4 18-92-36z" fill="#bfbebd" stroke="#565f62" strokeWidth="4" />
      <path d="M1074 522l80 26" stroke="#565f62" strokeWidth="9" strokeDasharray="9 6" />
      <path d="M1052 548q50-8 90 24 24 24 34 60l12 50 18 46-10 60-34 32 6-16 16-30-2-44-14-48-20-10-14 8-26 40-40 32-16 2 26-26 10-18-14-24 18-26 46 2-14-38q-40-6-76-40l-20 8 2 34-4 30-12 6-10-56 14-30z" />
      <path d="M1168 596q26 10 20 46l-22 46-30 40-10 60" fill="none" stroke="#bfbebd" strokeWidth="16" />
      <path d="M1168 596q26 10 20 46l-22 46-30 40-10 60" fill="none" stroke="#565f62" strokeWidth="9" strokeDasharray="18 5" />
      <circle cx="1126" cy="805" r="13" fill="none" stroke="#565f62" strokeWidth="5" />
      <path d="M1196 668q18 28 44 18 24-12 16-42-8-26-32-34-38-20-34-62 6-32 36-30" fill="none" stroke="#565f62" strokeWidth="9" />
      <path d="M1259 498l-20 12-28-6 6 14-12 20 26-6 20-14zM1256 612l-16 14-40-28 14 26 36 20zM1244 676l-20-2 16 34z" />
      {/* belt and scrolls */}
      <path d="M834 762q20-14 52 4 40 34 90 44l-30 24q-60-2-106-44-14-14-6-28z" fill="#bfbebd" stroke="#565f62" strokeWidth="5" />
      <circle cx="852" cy="774" r="10" fill="none" stroke="#565f62" strokeWidth="4" />
      <circle cx="886" cy="798" r="4" />
      <circle cx="918" cy="814" r="4" />
      <path d="M904 836h34v30h-34z" fill="#bfbebd" stroke="#565f62" strokeWidth="4" />
      <path d="M832 850q4 36 30 42h116q26-6 32-42l-14 8q-20-4-40 6-36 18-72 0-20-10-38-6z" />
      <path d="M900 860h42v14q-4 20-21 20-18-2-21-20z" fill="#bfbebd" stroke="#565f62" strokeWidth="5" />
      <path d="M650 825q80 0 140-20 60-4 70 46-30-16-60-6l-116 22q-20-10-34-42zM1191 826q-80 0-140-20-60-4-70 46 30-16 60-6l116 22q20-10 34-42z" />
      <g fill="#bfbebd" textAnchor="middle" className="font-['Lato',sans-serif] font-bold">
        <text transform="translate(766 846) rotate(-8)" fontSize="37" textLength="138" lengthAdjust="spacingAndGlyphs">
          DIEU ET
        </text>
        <text transform="translate(1084 848) rotate(8)" fontSize="35" textLength="164" lengthAdjust="spacingAndGlyphs">
          MON DROIT
        </text>
      </g>
    </svg>
  );
}

/* ---------- Page ---------- */

const link = 'underline decoration-[2.1px] underline-offset-[7px]';

function Chevron() {
  return (
    <svg className="mx-[20px]" width="12" height="22" viewBox="0 0 12 22" fill="none" stroke="#3f474a" strokeWidth="2">
      <path d="M1 1l10 10L1 21" />
    </svg>
  );
}

function Row({ label, children }: { label: string; children: ReactNode }) {
  return (
    <div className="flex border-b-[2.1px] border-[#8b8d8f] pb-[18px] pt-[22px] leading-[50px]">
      <dt className="w-[378px] shrink-0 whitespace-pre-line font-['Roboto',sans-serif] text-[38px] font-bold tracking-[-0.05px]">
        {label}
      </dt>
      <dd className="ml-[40px] text-[37px] tracking-[0.1px]">{children}</dd>
    </div>
  );
}

function Mono({ lines }: { lines: string[] }) {
  return (
    <a className="font-['DejaVu_Sans_Mono',monospace] text-[38px] tracking-[-0.03px] text-[#175890]">
      {lines.map((l) => (
        <span key={l} className="block whitespace-nowrap underline decoration-[2.1px] underline-offset-[6px]">
          {l}
        </span>
      ))}
    </a>
  );
}

export default function App() {
  return (
    <div className="h-[4168px] w-[2176px] overflow-hidden bg-white p-[68px] font-['Lato',sans-serif] text-[#090909] [font-variant-ligatures:none] [zoom:0.98254]">
      <div className="relative flex h-[4032px] w-[2040px] flex-col bg-[#c8c8c8]">
        <header className="shrink-0">
          <div className="flex h-[100px] items-start bg-[#090909] px-[60px] pt-[14px]">
            <Crown />
            <span className="ml-[14px] mt-[-1px] text-[57px] font-bold leading-[70px] text-[#c8c8c8]">GOV.UK</span>
          </div>
          <div className="h-[20px] bg-[#175890]" />
          <nav className="flex h-[132px] gap-[61px] border-b-[2.1px] border-[#8b8d8f] bg-[#bfbebd] px-[60px] text-[37px] text-[#144f82]">
            <span className="flex items-center font-['Roboto',sans-serif] text-[38px] font-bold tracking-[-0.07px] text-[#090909]">
              Submit and update your planning data
            </span>
            <span className="flex items-center pb-[3px] tracking-[0.1px] shadow-[inset_0_-10px_0_#144f82]">Find your organisation</span>
            <span className="flex items-center pb-[3px] tracking-[0.25px]">Guidance</span>
          </nav>
        </header>

        <main className="px-[60px]">
          <div className="mt-[29px] flex h-[40px] items-center text-[31px] leading-[40px] tracking-[0.1px]">
            <a className={link}>Home</a>
            <Chevron />
            <a className={link + ' tracking-[0.3px]'}>Organisations</a>
            <Chevron />
            <a className={link}>London Borough of Lambeth</a>
          </div>
          <p className="mt-[110px] text-[52.5px] leading-[60px] text-[#3f474a]">London Borough of Lambeth</p>
          <h1 className="mt-[12px] font-['Roboto',sans-serif] text-[96px] font-bold leading-[100px] tracking-[0.68px]">
            Article 4 direction details
          </h1>
          <div className="mt-[99px] flex h-[134px] gap-[61px] border-y-[2.1px] border-[#8b8d8f] text-[37px] text-[#144f82]">
            <span className="flex items-center pb-[3px] tracking-[-0.08px] shadow-[inset_0_-10px_0_#144f82]">Dataset overview</span>
            <span className="flex items-center pb-[3px] tracking-[0.25px]">
              Task list
              <span className="ml-[18px] mt-[7px] flex h-[50px] w-[36px] items-center justify-center rounded-[4px] bg-[#a82a17] text-[31px] text-[#c8c8c8]">
                1
              </span>
            </span>
          </div>

          <MapPanel />

          <div className="flex">
            <section className="w-[1260px] pt-[72px]">
              <h2 className="font-['Roboto',sans-serif] text-[48px] font-bold leading-[60px] tracking-[0.45px]">Dataset details</h2>
              <dl className="mt-[38px]">
                <Row label={'Number of records\nsupplied'}>10</Row>
                <Row label={'Records with missing\ndata'}>5/10</Row>
                <Row label={'Number of fields\nmatched'}>2/11</Row>
                <Row label="Endpoint URL">
                  <Mono
                    lines={['https://maps.borechester.gov.uk/', 'arcgis/rest/services/', 'A4D_CSB/MapServer/0/query?', 'outFields=*&where=1=1']}
                  />
                </Row>
                <Row label={'Source\ndocumentation URL'}>
                  <Mono lines={['https://www.borechester.gov.uk/', 'planning/data/article-4-directions']} />
                </Row>
                <Row label="Licence">Open Government Licence</Row>
                <Row label={'Endpoint last\naccessed'}>15 May 2024</Row>
                <Row label={'Endpoint last\nupdated'}>
                  <span className="tracking-[0.35px]">4 November 2023</span>
                </Row>
              </dl>
            </section>
            <aside className="ml-[25px] mt-[41px] h-[292px] w-[569px] rounded-[22px] border-[6px] border-[#fc3d62] bg-white pl-[29px] pt-[25px] text-[#0b0c0c]">
              <h2 className="font-['Roboto',sans-serif] text-[48px] font-bold leading-[60px] tracking-[0.35px]">Dataset actions</h2>
              <ul className="mt-[33px] text-[37px] leading-[60px]">
                <li>
                  <a className={link + ' tracking-[0.6px] text-[#4c2c92]'}>Check dataset</a>
                </li>
                <li>
                  <a className={link + ' tracking-[0.3px] text-[#1d70b8]'}>Article 4 direction guidance</a>
                </li>
              </ul>
            </aside>
          </div>

          <p className="mt-[62px] text-[37px] leading-[50px]">
            <span className="tracking-[-0.5px]">View your </span>
            <a className={link + ' text-[#3c2373]'}>task list</a>
            <span className="tracking-[-0.02px]"> to fix and improve your datasets</span>
          </p>
          <div className="mt-[119px] flex h-[82px] items-start border-t-[2.1px] border-[#8b8d8f] pt-[16px] text-[31px]">
            <span className="flex h-[50px] w-[170px] items-center justify-center bg-[#92a7ba] pb-[4px] text-[#0c2d4a]">Prototype</span>
            <span className="ml-[20px] whitespace-nowrap leading-[46px] tracking-[0.14px]">
              This prototype is being tested with users in local planning authorities. It may change or stop working.
            </span>
          </div>
        </main>

        <footer className="flex flex-1 items-end justify-between border-t-[2.1px] border-[#8b8d8f] bg-[#bfbebd] px-[60px] pb-[102px] text-[31px] leading-[40px]">
          <div className="flex flex-col gap-[40px]">
            <div className="flex gap-[38px]">
              <a className={link}>Manage your prototype</a>
              <a className={link + ' tracking-[0.35px]'}>Clear data</a>
            </div>
            <div className="flex">
              <span className="w-[109px] font-['Inter',sans-serif] text-[46px] font-black leading-[36px] tracking-[-6.5px]">OGL</span>
              <span className="whitespace-nowrap tracking-[0.17px]">
                All content is available under the <a className={link}>Open Government Licence v3.0</a>, except where otherwise stated
              </span>
            </div>
          </div>
          <div className="flex flex-col items-center">
            <Crest />
            <a className={link + ' mt-[19px] tracking-[0.06px]'}>© Crown copyright</a>
          </div>
        </footer>

        <svg className="absolute left-[1405px] top-[2250px] drop-shadow-[4px_4px_8px_rgba(0,0,0,0.15)]" width="58" height="146" viewBox="0 0 58 146">
          <path d="M58 3V146H0V140z" fill="#fc3d62" />
        </svg>
        <div className="absolute left-[827px] top-[2390px] h-[418px] w-[1133px] whitespace-nowrap rounded-[18px] bg-[#fc3d62] pl-[23px] pt-[30px] font-['Inter',sans-serif] text-[70px] font-semibold leading-[90px] tracking-[-0.86px] text-white shadow-[0_8px_24px_rgba(0,0,0,0.22)]">
          Add actions sidebar to dataset
          <br />
          details page with link to check
          <br />
          tool and to the specific guidance
          <br />
          for this dataset
        </div>
      </div>
    </div>
  );
}
